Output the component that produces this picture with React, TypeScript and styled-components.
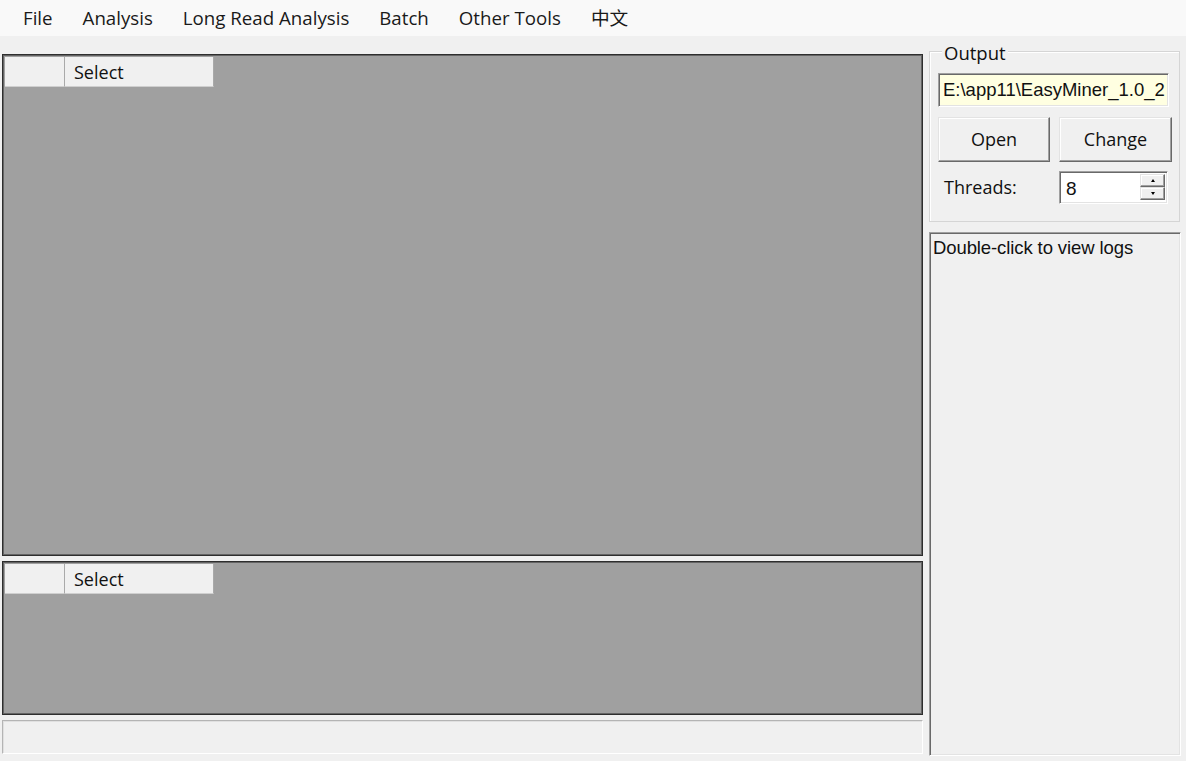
import React from "react";
import styled, { createGlobalStyle } from "styled-components";

const GlobalStyle = createGlobalStyle`
  html, body { margin: 0; padding: 0; background: #f0f0f0; }
  * { box-sizing: border-box; }
`;

const UI_FONT = `"Open Sans", "Noto Sans", "Noto Sans CJK SC", sans-serif`;
const SANS_FONT = `"Liberation Sans", Arial, sans-serif`;

const Window = styled.div`
  width: 1186px;
  height: 761px;
  background: #f0f0f0;
  display: flex;
  flex-direction: column;
  overflow: hidden;
  font-family: ${UI_FONT};
  color: #000;
`;

const MenuBar = styled.div`
  height: 36px;
  background: #f9f9f9;
  display: flex;
  align-items: center;
  padding-left: 8px;
`;

const MenuItem = styled.div`
  padding: 0 15px;
  font-size: 18.7px;
  line-height: 36px;
  color: #1a1a1a;
  white-space: nowrap;
`;

const Body = styled.div`
  flex: 1;
  display: flex;
  flex-direction: row;
`;

const LeftColumn = styled.div`
  width: 921px;
  margin-left: 2px;
  padding-top: 18px;
  display: flex;
  flex-direction: column;
  gap: 5px;
`;

const Grid = styled.div<{ $h: number }>`
  height: ${(p) => p.$h}px;
  background: #a0a0a0;
  border: 1px solid #2e2e2e;
  box-shadow: inset 0 0 0 1px #646464;
  padding: 2px;
`;

const HeaderRow = styled.div`
  display: flex;
  height: 30px;
`;

const HeaderCell = styled.div<{ $w: number }>`
  width: ${(p) => p.$w}px;
  background: #f0f0f0;
  border-right: 1px solid #a9a9a9;
  border-bottom: 1px solid #cfcfcf;
  font-size: 18px;
  line-height: 31px;
  padding-left: 9px;
  color: #111;
`;

const StatusBox = styled.div`
  height: 34px;
  background: #f0f0f0;
  border-style: solid;
  border-width: 1px;
  border-color: #b4b4b4 #ffffff #ffffff #b4b4b4;
  box-shadow: inset 1px 1px #e0e0e0;
`;

const RightColumn = styled.div`
  width: 251px;
  margin-left: 6px;
  padding-top: 15px;
  display: flex;
  flex-direction: column;
  gap: 10px;
`;

const GroupBox = styled.div`
  position: relative;
  height: 171px;
  width: 251px;
  border: 1px solid #d5d5d5;
  box-shadow: inset 1px 1px #ffffff;
  padding: 21px 0 0 8px;
`;

const Legend = styled.div`
  position: absolute;
  top: -11px;
  left: 12px;
  padding: 0 2px;
  background: #f0f0f0;
  font-size: 18.5px;
  line-height: 24px;
  color: #111;
`;

const TextBox = styled.div`
  width: 231px;
  height: 34px;
  background: #ffffe1;
  border-style: solid;
  border-width: 1px;
  border-color: #a0a0a0 #ffffff #ffffff #a0a0a0;
  box-shadow: inset 1px 1px #696969, inset -1px -1px #e3e3e3;
  font-family: ${SANS_FONT};
  font-size: 18.5px;
  line-height: 32px;
  padding-left: 4px;
  white-space: nowrap;
  overflow: hidden;
  color: #111;
`;

const ButtonRow = styled.div`
  display: grid;
  grid-template-columns: 112px 113px;
  column-gap: 9px;
  margin-top: 10px;
`;

const Button = styled.div`
  height: 45px;
  background: #f0f0f0;
  border-style: solid;
  border-width: 1px;
  border-color: #e3e3e3 #696969 #696969 #e3e3e3;
  box-shadow: inset -1px -1px #a0a0a0, inset 1px 1px #ffffff;
  display: flex;
  align-items: center;
  justify-content: center;
  font-size: 18px;
  color: #111;
  padding-bottom: 2px;
`;

const ThreadsRow = styled.div`
  display: grid;
  grid-template-columns: 112px 109px;
  column-gap: 9px;
  margin-top: 9px;
  align-items: center;
`;

const ThreadsLabel = styled.div`
  font-size: 18px;
  padding-left: 6px;
  color: #111;
  padding-bottom: 1px;
`;

const Spinner = styled.div`
  height: 33px;
  background: #ffffff;
  border-style: solid;
  border-width: 1px;
  border-color: #a0a0a0 #ffffff #ffffff #a0a0a0;
  box-shadow: inset 1px 1px #696969, inset -1px -1px #e3e3e3;
  display: flex;
  align-items: stretch;
`;

const SpinValue = styled.div`
  flex: 1;
  font-family: ${SANS_FONT};
  font-size: 19px;
  line-height: 31px;
  padding: 1px 0 0 6px;
  color: #111;
`;

const SpinButtons = styled.div`
  width: 27px;
  padding: 2px 2px 3px 0;
  display: flex;
  flex-direction: column;
`;

const SpinButton = styled.div`
  flex: 1;
  background: #f0f0f0;
  border-style: solid;
  border-width: 1px;
  border-color: #e3e3e3 #696969 #696969 #e3e3e3;
  box-shadow: inset -1px -1px #a0a0a0, inset 1px 1px #ffffff;
  display: flex;
  align-items: center;
  justify-content: center;
`;

const Arrow = styled.div<{ $up?: boolean }>`
  width: 0;
  height: 0;
  border-left: 2.5px solid transparent;
  border-right: 2.5px solid transparent;
  ${(p) =>
    p.$up
      ? "border-bottom: 3px solid #000;"
      : "border-top: 3px solid #000;"}
`;

const LogBox = styled.div`
  height: 524px;
  width: 252px;
  background: #f0f0f0;
  border-style: solid;
  border-width: 1px;
  border-color: #a0a0a0 #ffffff #ffffff #a0a0a0;
  box-shadow: inset 1px 1px #696969, inset -1px -1px #e3e3e3;
  font-family: ${SANS_FONT};
  font-size: 18.5px;
  line-height: 28px;
  padding: 1px 0 0 3px;
  color: #111;
  white-space: nowrap;
  letter-spacing: -0.1px;
`;

const menus = ["File", "Analysis", "Long Read Analysis", "Batch", "Other Tools", "中文"];

function DataGrid({ height }: { height: number }) {
  return (
    <Grid $h={height}>
      <HeaderRow>
        <HeaderCell $w={60} />
        <HeaderCell $w={149}>Select</HeaderCell>
      </HeaderRow>
    </Grid>
  );
}

export default function App() {
  return (
    <Window>
      <GlobalStyle />
      <MenuBar>
        {menus.map((m) => (
          <MenuItem key={m}>{m}</MenuItem>
        ))}
      </MenuBar>
      <Body>
        <LeftColumn>
          <DataGrid height={502} />
          <DataGrid height={154} />
          <StatusBox />
        </LeftColumn>
        <RightColumn>
          <GroupBox>
            <Legend>Output</Legend>
            <TextBox>E:\app11\EasyMiner_1.0_2</TextBox>
            <ButtonRow>
              <Button>Open</Button>
              <Button>Change</Button>
            </ButtonRow>
            <ThreadsRow>
              <ThreadsLabel>Threads:</ThreadsLabel>
              <Spinner>
                <SpinValue>8</SpinValue>
                <SpinButtons>
                  <SpinButton>
                    <Arrow $up />
                  </SpinButton>
                  <SpinButton>
                    <Arrow />
                  </SpinButton>
                </SpinButtons>
              </Spinner>
            </ThreadsRow>
          </GroupBox>
          <LogBox>Double-click to view logs</LogBox>
        </RightColumn>
      </Body>
    </Window>
  );
}
